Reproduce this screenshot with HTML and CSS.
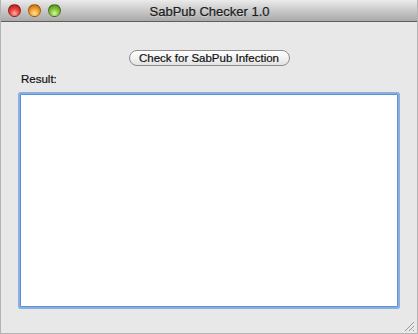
FILE: index.html
```html
<!DOCTYPE html>
<html lang="en">
<head>
  <meta charset="UTF-8">
  <title>SabPub Checker 1.0</title>
  <link rel="stylesheet" href="styles.css">
</head>
<body>
  <div class="window">
    <div class="titlebar">
      <div class="lights">
        <span class="light red"></span>
        <span class="light yellow"></span>
        <span class="light green"></span>
      </div>
      <div class="title">SabPub Checker 1.0</div>
    </div>

    <div class="content">
      <div class="actions">
        <button class="btn">Check for SabPub Infection</button>
      </div>
      <label class="label" for="result">Result:</label>
      <textarea id="result" class="result"></textarea>
    </div>

    <svg class="grip" width="12" height="12" viewBox="0 0 12 12">
      <path d="M11 2 L2 11 M11 6 L6 11 M11 10 L10 11" stroke="#9a9a9a" stroke-width="1"/>
    </svg>
  </div>
</body>
</html>
```

FILE: styles.css
```css
html, body {
  margin: 0;
  padding: 0;
}

body {
  font-family: 'Liberation Sans', 'DejaVu Sans', sans-serif;
  background-color: #e8e8e8;
}

.window {
  position: relative;
  width: 418px;
  height: 334px;
  box-sizing: border-box;
  display: flex;
  flex-direction: column;
  background: #e8e8e8;
  border-left: 1px solid #b4b4b4;
  border-right: 1px solid #b4b4b4;
  border-bottom: 1px solid #b4b4b4;
}

.titlebar {
  position: relative;
  height: 21px;
  background: linear-gradient(#ebebeb, #c9c9c9 50%, #a9a9a9);
  border-bottom: 1px solid #5e5e5e;
  display: flex;
  align-items: center;
  justify-content: center;
}

.lights {
  position: absolute;
  left: 7px;
  top: 4px;
  display: flex;
  gap: 7px;
}

.light {
  width: 13px;
  height: 13px;
  border-radius: 50%;
  box-sizing: border-box;
  border: 1px solid rgba(0, 0, 0, 0.35);
}

.red {
  background: radial-gradient(circle at 50% 75%, #ffb0a8 0, #e8413a 45%, #a3120e 100%);
}

.yellow {
  background: radial-gradient(circle at 50% 75%, #ffe3a0 0, #f3a129 45%, #b55c06 100%);
}

.green {
  background: radial-gradient(circle at 50% 75%, #d8f5a0 0, #82c33a 45%, #3f7c0e 100%);
}

.title {
  font-size: 13px;
  color: #1c1c1c;
  padding-top: 1px;
  padding-left: 1px;
  -webkit-text-stroke: 0.25px #1c1c1c;
  text-shadow: 0 1px 0 rgba(255, 255, 255, 0.5);
}

.content {
  flex: 1;
  display: flex;
  flex-direction: column;
  padding: 28px 18px 26px 19px;
}

.actions {
  display: flex;
  justify-content: center;
  padding-right: 1px;
}

.btn {
  width: 161px;
  height: 16px;
  padding: 0;
  font-family: 'Liberation Sans', sans-serif;
  font-size: 11.5px;
  color: #111;
  -webkit-text-stroke: 0.2px #111;
  background: linear-gradient(#ffffff, #f2f2f2 50%, #e2e2e2);
  border: 1px solid #8c8c8c;
  border-radius: 8px;
  line-height: 14px;
}

.label {
  font-size: 11.5px;
  color: #111;
  -webkit-text-stroke: 0.2px #111;
  margin: 6px 0 0 1px;
  height: 15px;
  line-height: 15px;
}

.result {
  flex: 1;
  margin: 7px 0 0 0;
  box-sizing: border-box;
  width: 378px;
  border: 1px solid #5f90d4;
  border-radius: 1px;
  background: #fff;
  box-shadow: 0 0 0 2px #8ab0e2;
  outline: none;
  resize: none;
}

.grip {
  position: absolute;
  right: 2px;
  bottom: 1px;
}
```
